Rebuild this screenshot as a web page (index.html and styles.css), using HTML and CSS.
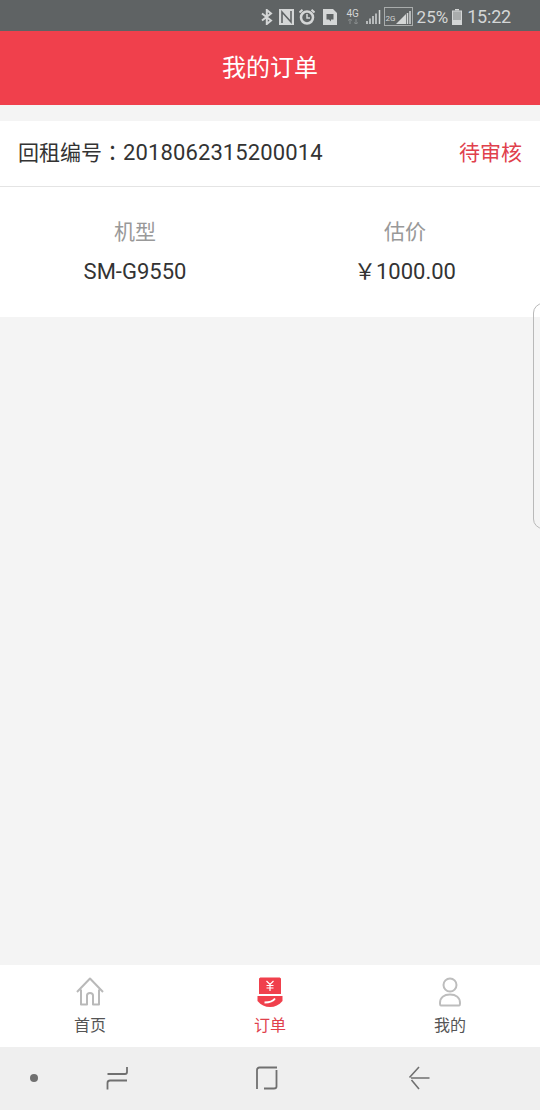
FILE: index.html
```html
<!DOCTYPE html>
<html lang="zh-CN">
<head>
    <meta charset="UTF-8">
    <meta name="viewport" content="width=device-width, initial-scale=1.0">
    <title>我的订单</title>
    <link rel="stylesheet" href="styles.css">
</head>
<body>
    <div class="status-bar">
        <svg class="st-bt" width="12" height="16" viewBox="0 0 12 16"><path d="M1 4.500 10 11.500 5.800 15V1L10 4.500 1 11.500" fill="none" stroke="#d4d6d6" stroke-width="2"/></svg>
        <svg class="st-nfc" width="15" height="16" viewBox="0 0 15 16"><rect width="15" height="16" fill="#d4d6d6"/><path d="M3 14V3L12 13V2" fill="none" stroke="#5f6364" stroke-width="1.600"/></svg>
        <svg class="st-alarm" width="16" height="16" viewBox="0 0 16 16"><circle cx="8" cy="8.500" r="6" fill="none" stroke="#d4d6d6" stroke-width="2.500"/><path d="M8 5V9H11" fill="none" stroke="#d4d6d6" stroke-width="1.500"/><path d="M0.500 3.500 3.500 0.800M15.500 3.500 12.500 0.800" stroke="#d4d6d6" stroke-width="2"/></svg>
        <svg class="st-note" width="14" height="16" viewBox="0 0 14 16"><path fill-rule="evenodd" d="M0 0H10L14 4V16H0ZM3.500 5V10.500H6L8 12.500V10.500H10.500V5Z" fill="#d4d6d6"/></svg>
        <span class="st-net"><span>4G</span><svg width="12" height="5" viewBox="0 0 12 5"><path d="M3 0V5M1 1.500 3 0 5 1.500M9 0V5M7 3.500 9 5 11 3.500" fill="none" stroke="#8b8f8f" stroke-width="1"/></svg></span>
        <svg class="st-signal" width="16" height="15" viewBox="0 0 16 15"><path d="M1 15V12M4 15V9.500M7 15V7M10 15V4.500M13.500 15V1" stroke="#d4d6d6" stroke-width="1.500"/></svg>
        <span class="st-sim">
            <span>2G</span>
            <svg width="15" height="13" viewBox="0 0 15 13"><path d="M0 13 10 3V13Z" fill="#d4d6d6"/><path d="M11.500 13V2M14 13V0" stroke="#d4d6d6" stroke-width="1.500"/></svg>
        </span>
        <span class="st-batt-text">25%</span>
        <svg class="st-batt" width="10" height="16" viewBox="0 0 10 16"><path d="M3 0H7V1.500H3Z" fill="#d4d6d6"/><rect x="0.500" y="2" width="9" height="13.500" fill="#a9acac" stroke="#d4d6d6"/><rect x="1" y="11" width="8" height="4" fill="#d4d6d6"/></svg>
        <span class="st-time">15:22</span>
    </div>

    <header class="title-bar">我的订单</header>

    <main class="content">
        <div class="order-card">
            <div class="order-head">
                <span class="order-no"><span class="cjk">回租编号</span><span class="cjk colon" lang="zh-TW">：</span>2018062315200014</span>
                <span class="order-status">待审核</span>
            </div>
            <div class="order-body">
                <div class="order-col">
                    <span class="col-label">机型</span>
                    <span class="col-value">SM-G9550</span>
                </div>
                <div class="order-col">
                    <span class="col-label">估价</span>
                    <span class="col-value">￥1000.00</span>
                </div>
            </div>
        </div>
        <div class="edge-handle"></div>
    </main>

    <nav class="tab-bar">
        <div class="tab">
            <svg width="30" height="30" viewBox="0 0 30 30"><path d="M2 15 15 1.500 28 15M6 12.500V27.500H12V18.500C12 15 18 15 18 18.500V27.500H24V12.500" fill="none" stroke="#b9b9b9" stroke-width="2" stroke-linejoin="round"/></svg>
            <span>首页</span>
        </div>
        <div class="tab tab-active">
            <svg width="30" height="30" viewBox="0 0 30 30"><path d="M4 2C4 1 5 0.500 6 0.500H24C25 0.500 26 1 26 2V17H4Z" fill="#f0404c"/><path d="M2.500 19H27.500V24C24 28 20 30 15 30 10 30 6 28 2.500 24Z" fill="#f0404c"/><path d="M9.500 25.500C14 25.500 18 24.500 20 21.500" fill="none" stroke="#fff" stroke-width="1.800"/><path d="M11.500 4 15 7.500 18.500 4M15 7.500V14M11.500 8.500H18.500M11.500 11H18.500" fill="none" stroke="#fff" stroke-width="1.200"/></svg>
            <span>订单</span>
        </div>
        <div class="tab">
            <svg width="30" height="30" viewBox="0 0 30 30"><circle cx="15" cy="8" r="6.500" fill="none" stroke="#bdbdbd" stroke-width="2"/><path d="M6 28.500C5 28.500 5 27.500 5 26 5 20.500 9 17.500 15 17.500 21 17.500 25 20.500 25 26 25 27.500 25 28.500 24 28.500Z" fill="none" stroke="#bdbdbd" stroke-width="2"/></svg>
            <span>我的</span>
        </div>
    </nav>

    <div class="system-nav">
        <span class="nav-dot"></span>
        <svg class="nav-recent" width="22" height="24" viewBox="0 0 22 24"><path d="M21 1V6C21 7.500 20 8 19 8H1.500M21 14.500H4C2.500 14.500 1.500 15 1.500 17V23.500" fill="none" stroke="#707070" stroke-width="1.800"/></svg>
        <svg class="nav-home" width="22" height="24" viewBox="0 0 22 24"><path d="M21 1.500H3.500C2 1.500 1 2.500 1 4V23M20.500 4V20.500C20.500 22 19.500 22.500 18 22.500H8" fill="none" stroke="#707070" stroke-width="1.800"/></svg>
        <svg class="nav-back" width="22" height="24" viewBox="0 0 22 24"><path d="M21.500 12H3M11 1 1.500 11.500M3.500 14 11 23" fill="none" stroke="#707070" stroke-width="1.600"/></svg>
    </div>
</body>
</html>
```

FILE: styles.css
```css
* {
    box-sizing: border-box;
}

body {
    margin: 0;
    height: 100vh;
    display: flex;
    flex-direction: column;
    overflow: hidden;
    background-color: #f4f4f4;
    font-family: "Roboto", "Noto Sans CJK SC", sans-serif;
    color: #333;
}

/* status bar */
.status-bar {
    height: 31px;
    flex-shrink: 0;
    display: flex;
    align-items: center;
    justify-content: flex-end;
    padding: 2px 29px 0 0;
    background-color: #5f6364;
    color: #d4d6d6;
}

.st-nfc {
    margin-left: 6px;
}

.st-alarm {
    margin-left: 5px;
}

.st-note {
    margin-left: 8px;
}

.st-net {
    display: flex;
    flex-direction: column;
    align-items: center;
    gap: 1px;
    width: 12px;
    margin-left: 10px;
    font-size: 10px;
    line-height: 9px;
}

.st-signal {
    margin-left: 7px;
}

.st-sim {
    display: flex;
    align-items: flex-end;
    justify-content: space-between;
    width: 29px;
    height: 19px;
    margin-left: 2px;
    padding: 0 1px 1px 1px;
    border: 1px solid #a9acac;
    font-size: 8px;
    line-height: 10px;
}

.st-batt-text {
    margin-left: 4px;
    font-size: 17px;
    line-height: 20px;
}

.st-batt {
    margin-left: 4px;
}

.st-time {
    margin-left: 5px;
    font-size: 18px;
    line-height: 20px;
    letter-spacing: -0.2px;
}

/* title */
.title-bar {
    height: 74px;
    flex-shrink: 0;
    display: flex;
    align-items: center;
    justify-content: center;
    padding-bottom: 6px;
    background-color: #f0404c;
    color: #fff;
    font-size: 24px;
}

/* order list */
.content {
    flex: 1;
    position: relative;
    padding-top: 16px;
}

.order-card {
    background-color: #fff;
}

.order-head {
    height: 66px;
    display: flex;
    align-items: center;
    justify-content: space-between;
    padding: 0 18px 6px;
    border-bottom: 1px solid #e4e4e4;
    font-size: 22px;
}

.order-no {
    color: #333;
    letter-spacing: 0.12px;
}

.cjk {
    font-size: 21px;
    letter-spacing: 0;
}

.colon {
    font-family: "Noto Sans CJK TC", sans-serif;
}

.order-status {
    color: #e0404c;
    font-size: 21px;
}

.order-body {
    height: 130px;
    display: grid;
    grid-template-columns: 270px 270px;
    padding-top: 30px;
}

.order-col {
    display: flex;
    flex-direction: column;
    align-items: center;
    gap: 8px;
    font-size: 22px;
    line-height: 31px;
}

.col-label {
    color: #999;
    font-size: 21px;
}

.col-value {
    color: #333;
}

.edge-handle {
    position: absolute;
    top: 198px;
    right: -6px;
    width: 13px;
    height: 226px;
    border: 1px solid #b9b9b9;
    border-radius: 10px 0 0 10px;
}

/* bottom tabs */
.tab-bar {
    height: 82px;
    flex-shrink: 0;
    display: grid;
    grid-template-columns: repeat(3, 180px);
    background-color: #fff;
}

.tab {
    display: flex;
    flex-direction: column;
    align-items: center;
    padding-top: 12px;
    color: #555;
    font-size: 16px;
    line-height: 20px;
}

.tab svg {
    margin-bottom: 9px;
}

.tab-active {
    color: #e0404c;
}

/* android nav */
.system-nav {
    height: 63px;
    flex-shrink: 0;
    display: flex;
    align-items: center;
    padding: 0 0 2px 30px;
    background-color: #efefef;
}

.nav-dot {
    width: 8px;
    height: 8px;
    border-radius: 50%;
    background-color: #707070;
}

.nav-recent {
    margin-left: 68px;
}

.nav-home {
    margin-left: 128px;
}

.nav-back {
    margin-left: 130px;
}
```
